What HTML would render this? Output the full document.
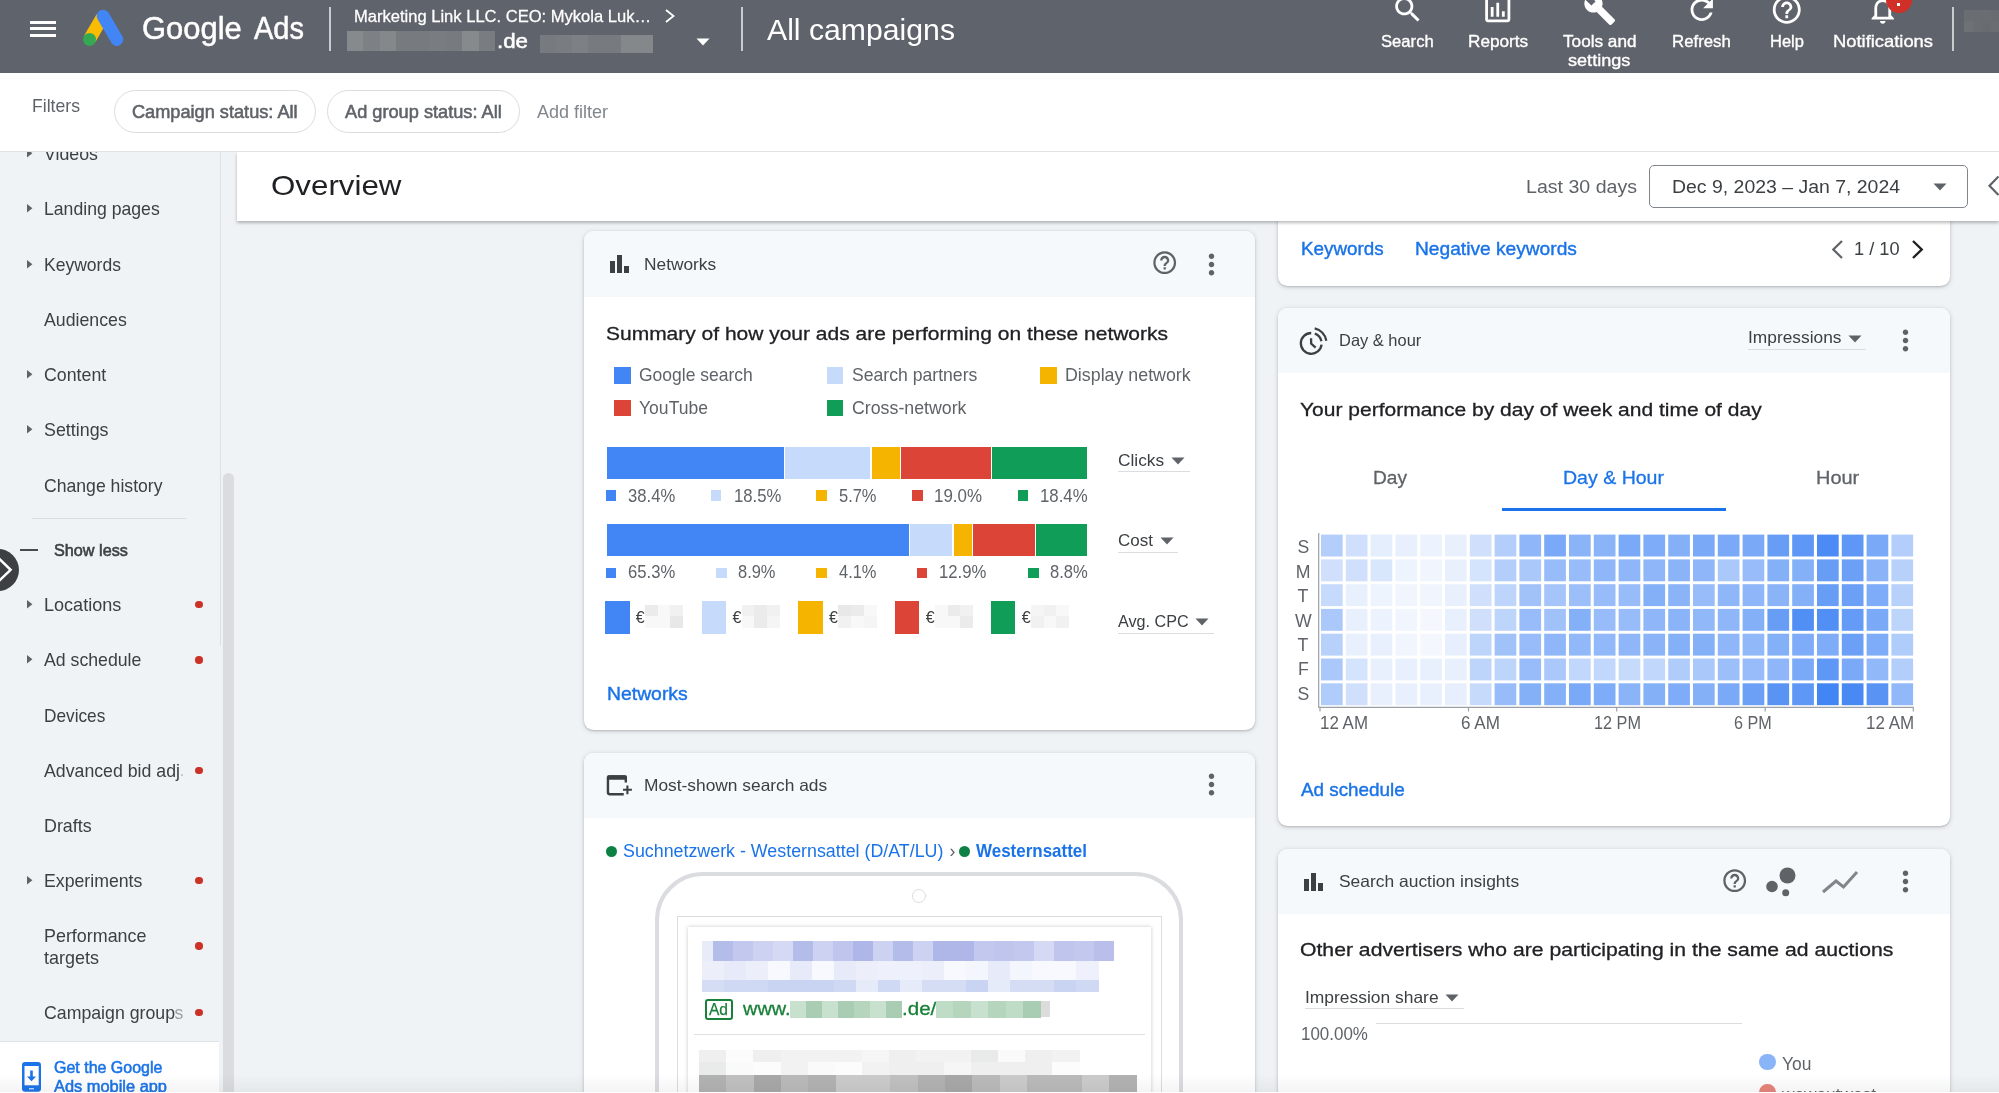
<!DOCTYPE html>
<html><head><meta charset="utf-8"><title>Google Ads - Overview</title>
<style>
*{box-sizing:border-box;margin:0;padding:0}
html,body{width:1999px;height:1093px;overflow:hidden;background:#eff3f5;font-family:"Liberation Sans",sans-serif}
.abs{position:absolute}
.t{position:absolute;white-space:pre}
svg{overflow:visible}
</style></head><body>
<div id="root" style="position:absolute;left:0;top:0;width:1999px;height:1093px;overflow:hidden;will-change:transform">
<div class="abs" style="left:219.5px;top:152.0px;width:1.0px;height:494.0px;background:#dde1e4;"></div>
<div class="abs" style="left:222.9px;top:473.4px;width:11px;height:640px;border-radius:5.5px;background:#dadce0"></div>
<span class="t" style="left:43.5px;top:142.00px;font-size:17.7px;line-height:24px;font-weight:normal;color:#3c4043;transform:scaleX(1.0044);transform-origin:0 0;">Videos</span>
<svg class="abs" style="left:26.5px;top:148.7px" width="6" height="9" viewBox="0 0 6 9"><path d="M0 0 L5.4 4.2 L0 8.4Z" fill="#5f6368"/></svg>
<span class="t" style="left:43.5px;top:197.00px;font-size:17.7px;line-height:24px;font-weight:normal;color:#3c4043;transform:scaleX(0.9969);transform-origin:0 0;">Landing pages</span>
<svg class="abs" style="left:26.5px;top:203.9px" width="6" height="9" viewBox="0 0 6 9"><path d="M0 0 L5.4 4.2 L0 8.4Z" fill="#5f6368"/></svg>
<span class="t" style="left:43.5px;top:253.00px;font-size:17.7px;line-height:24px;font-weight:normal;color:#3c4043;transform:scaleX(0.9901);transform-origin:0 0;">Keywords</span>
<svg class="abs" style="left:26.5px;top:259.5px" width="6" height="9" viewBox="0 0 6 9"><path d="M0 0 L5.4 4.2 L0 8.4Z" fill="#5f6368"/></svg>
<span class="t" style="left:43.5px;top:308.00px;font-size:17.7px;line-height:24px;font-weight:normal;color:#3c4043;transform:scaleX(1.0023);transform-origin:0 0;">Audiences</span>
<span class="t" style="left:43.5px;top:363.00px;font-size:17.7px;line-height:24px;font-weight:normal;color:#3c4043;transform:scaleX(1.0040);transform-origin:0 0;">Content</span>
<svg class="abs" style="left:26.5px;top:370.0px" width="6" height="9" viewBox="0 0 6 9"><path d="M0 0 L5.4 4.2 L0 8.4Z" fill="#5f6368"/></svg>
<span class="t" style="left:43.5px;top:418.00px;font-size:17.7px;line-height:24px;font-weight:normal;color:#3c4043;transform:scaleX(1.0090);transform-origin:0 0;">Settings</span>
<svg class="abs" style="left:26.5px;top:425.1px" width="6" height="9" viewBox="0 0 6 9"><path d="M0 0 L5.4 4.2 L0 8.4Z" fill="#5f6368"/></svg>
<span class="t" style="left:43.5px;top:474.00px;font-size:17.7px;line-height:24px;font-weight:normal;color:#3c4043;transform:scaleX(0.9961);transform-origin:0 0;">Change history</span>
<span class="t" style="left:43.5px;top:593.00px;font-size:17.7px;line-height:24px;font-weight:normal;color:#3c4043;transform:scaleX(1.0209);transform-origin:0 0;">Locations</span>
<svg class="abs" style="left:26.5px;top:599.7px" width="6" height="9" viewBox="0 0 6 9"><path d="M0 0 L5.4 4.2 L0 8.4Z" fill="#5f6368"/></svg>
<div class="abs" style="left:195px;top:600.9px;width:7.5px;height:7.5px;border-radius:50%;background:#cc3127"></div>
<span class="t" style="left:43.5px;top:648.00px;font-size:17.7px;line-height:24px;font-weight:normal;color:#3c4043;transform:scaleX(1.0004);transform-origin:0 0;">Ad schedule</span>
<svg class="abs" style="left:26.5px;top:655.1px" width="6" height="9" viewBox="0 0 6 9"><path d="M0 0 L5.4 4.2 L0 8.4Z" fill="#5f6368"/></svg>
<div class="abs" style="left:195px;top:656.3px;width:7.5px;height:7.5px;border-radius:50%;background:#cc3127"></div>
<span class="t" style="left:43.5px;top:704.00px;font-size:17.7px;line-height:24px;font-weight:normal;color:#3c4043;transform:scaleX(0.9742);transform-origin:0 0;">Devices</span>
<span class="t" style="left:43.5px;top:759.00px;font-size:17.7px;line-height:24px;font-weight:normal;color:#3c4043;transform:scaleX(1.0021);transform-origin:0 0;">Advanced bid adj</span>
<div class="abs" style="left:195px;top:766.5px;width:7.5px;height:7.5px;border-radius:50%;background:#cc3127"></div>
<span class="t" style="left:43.5px;top:814.00px;font-size:17.7px;line-height:24px;font-weight:normal;color:#3c4043;transform:scaleX(1.0087);transform-origin:0 0;">Drafts</span>
<span class="t" style="left:43.5px;top:869.00px;font-size:17.7px;line-height:24px;font-weight:normal;color:#3c4043;transform:scaleX(1.0009);transform-origin:0 0;">Experiments</span>
<svg class="abs" style="left:26.5px;top:875.6px" width="6" height="9" viewBox="0 0 6 9"><path d="M0 0 L5.4 4.2 L0 8.4Z" fill="#5f6368"/></svg>
<div class="abs" style="left:195px;top:876.8px;width:7.5px;height:7.5px;border-radius:50%;background:#cc3127"></div>
<span class="t" style="left:43.5px;top:1001.00px;font-size:17.7px;line-height:24px;font-weight:normal;color:#3c4043;transform:scaleX(1.0017);transform-origin:0 0;">Campaign group</span>
<div class="abs" style="left:195px;top:1008.9px;width:7.5px;height:7.5px;border-radius:50%;background:#cc3127"></div>
<span class="t" style="left:179.5px;top:759.00px;font-size:17.5px;line-height:23px;font-weight:normal;color:#bdc1c6;">.</span>
<span class="t" style="left:174.6px;top:1002.00px;font-size:17.5px;line-height:23px;font-weight:normal;color:#9aa0a6;">s</span>
<span class="t" style="left:43.5px;top:924.00px;font-size:17.7px;line-height:24px;font-weight:normal;color:#3c4043;transform:scaleX(1.0122);transform-origin:0 0;">Performance</span>
<span class="t" style="left:43.5px;top:946.00px;font-size:17.7px;line-height:24px;font-weight:normal;color:#3c4043;transform:scaleX(1.0170);transform-origin:0 0;">targets</span>
<div class="abs" style="left:195px;top:942.3px;width:7.5px;height:7.5px;border-radius:50%;background:#cc3127"></div>
<div class="abs" style="left:32.0px;top:518.3px;width:153.5px;height:1.0px;background:#dadce0;"></div>
<div class="abs" style="left:19.7px;top:548.5px;width:18.4px;height:2.6px;background:#474b50;"></div>
<span class="t" style="left:54.4px;top:540.00px;font-size:15.6px;line-height:21px;font-weight:normal;color:#3c4043;transform:scaleX(1.0397);transform-origin:0 0;-webkit-text-stroke:0.55px #3c4043;">Show less</span>
<div class="abs" style="left:-23px;top:548.5px;width:42px;height:42px;border-radius:50%;background:#3c4043"></div>
<svg class="abs" style="left:0;top:558px" width="14" height="24" viewBox="0 0 14 24"><path d="M-2 -0.4 L10.6 11.8 L-2 24" fill="none" stroke="#fff" stroke-width="2.5"/></svg>
<div class="abs" style="left:0.0px;top:1041.3px;width:218.7px;height:52.0px;background:#fff;border-top:1px solid #e0e3e5"></div>
<svg class="abs" style="left:22px;top:1062px" width="19" height="30" viewBox="0 0 19 30"><rect x="0" y="0" width="19" height="29.8" rx="3.2" fill="#1a73e8"/><rect x="2.5" y="4" width="14.2" height="19.3" fill="#fff"/><rect x="7" y="26.3" width="5" height="1" fill="#fff"/><path d="M8.2 8.5 h2.6 v6 h3.2 L9.5 19.2 L5 14.5 h3.2z" fill="#1a73e8"/></svg>
<span class="t" style="left:54.2px;top:1056.00px;font-size:16.5px;line-height:22px;font-weight:normal;color:#1a73e8;transform:scaleX(0.9685);transform-origin:0 0;-webkit-text-stroke:0.55px #1a73e8;">Get the Google</span>
<span class="t" style="left:54.2px;top:1075.00px;font-size:16.5px;line-height:22px;font-weight:normal;color:#1a73e8;transform:scaleX(0.9934);transform-origin:0 0;-webkit-text-stroke:0.55px #1a73e8;">Ads mobile app</span>
<div class="abs" style="left:584.0px;top:231.2px;width:671.2px;height:498.8px;background:#fff;border-radius:9.5px;box-shadow:0 1px 2px rgba(60,64,67,.24),0 1px 4px 1px rgba(60,64,67,.13);overflow:hidden"><div style="height:65.5px;background:#f5f9fb"></div></div>
<div class="abs" style="left:610.1px;top:261.3px;width:4.5px;height:12.0px;background:#3c4043;"></div><div class="abs" style="left:617.0px;top:255.4px;width:4.5px;height:17.9px;background:#3c4043;"></div><div class="abs" style="left:624.1px;top:265.8px;width:4.5px;height:7.5px;background:#3c4043;"></div>
<span class="t" style="left:644.2px;top:253.00px;font-size:16.5px;line-height:22px;font-weight:normal;color:#3c4043;transform:scaleX(1.0499);transform-origin:0 0;">Networks</span>
<svg class="abs" style="left:1151.1px;top:248.6px" width="27.4" height="27.4" viewBox="0 0 24 24"><path fill="#5f6368" d="M11 18h2v-2h-2v2zm1-16C6.48 2 2 6.48 2 12s4.48 10 10 10 10-4.48 10-10S17.52 2 12 2zm0 18c-4.41 0-8-3.59-8-8s3.59-8 8-8 8 3.59 8 8-3.59 8-8 8zm0-14c-2.21 0-4 1.79-4 4h2c0-1.1.9-2 2-2s2 .9 2 2c0 2-3 1.75-3 5h2c0-2.25 3-2.5 3-5 0-2.21-1.79-4-4-4z"/></svg>
<svg class="abs" style="left:1195.0px;top:248.0px" width="33.0" height="33.0" viewBox="0 0 24 24"><path fill="#5f6368" d="M12 8c1.1 0 2-.9 2-2s-.9-2-2-2-2 .9-2 2 .9 2 2 2zm0 2c-1.1 0-2 .9-2 2s.9 2 2 2 2-.9 2-2-.9-2-2-2zm0 6c-1.1 0-2 .9-2 2s.9 2 2 2 2-.9 2-2-.9-2-2-2z"/></svg>
<span class="t" style="left:605.7px;top:321.00px;font-size:19px;line-height:25px;font-weight:normal;color:#202124;transform:scaleX(1.1041);transform-origin:0 0;-webkit-text-stroke:0.30px #202124;">Summary of how your ads are performing on these networks</span>
<div class="abs" style="left:613.8px;top:366.8px;width:16.8px;height:16.8px;background:#4285f4;"></div>
<span class="t" style="left:639.0px;top:363.00px;font-size:17.7px;line-height:24px;font-weight:normal;color:#5f6368;transform:scaleX(0.9892);transform-origin:0 0;">Google search</span>
<div class="abs" style="left:826.7px;top:366.8px;width:16.8px;height:16.8px;background:#c6dafc;"></div>
<span class="t" style="left:851.9px;top:363.00px;font-size:17.7px;line-height:24px;font-weight:normal;color:#5f6368;transform:scaleX(0.9957);transform-origin:0 0;">Search partners</span>
<div class="abs" style="left:1039.9px;top:366.8px;width:16.8px;height:16.8px;background:#f4b400;"></div>
<span class="t" style="left:1064.7px;top:363.00px;font-size:17.7px;line-height:24px;font-weight:normal;color:#5f6368;transform:scaleX(1.0069);transform-origin:0 0;">Display network</span>
<div class="abs" style="left:613.8px;top:399.6px;width:16.8px;height:16.8px;background:#db4437;"></div>
<span class="t" style="left:639.0px;top:396.00px;font-size:17.7px;line-height:24px;font-weight:normal;color:#5f6368;transform:scaleX(0.9926);transform-origin:0 0;">YouTube</span>
<div class="abs" style="left:826.7px;top:399.6px;width:16.8px;height:16.8px;background:#0f9d58;"></div>
<span class="t" style="left:851.9px;top:396.00px;font-size:17.7px;line-height:24px;font-weight:normal;color:#5f6368;transform:scaleX(1.0042);transform-origin:0 0;">Cross-network</span>
<div class="abs" style="left:606.8px;top:446.5px;width:176.8px;height:32.6px;background:#4285f4;"></div><div class="abs" style="left:784.8px;top:446.5px;width:85.6px;height:32.6px;background:#c6dafc;"></div><div class="abs" style="left:871.6px;top:446.5px;width:28.2px;height:32.6px;background:#f4b400;"></div><div class="abs" style="left:901.0px;top:446.5px;width:89.9px;height:32.6px;background:#db4437;"></div><div class="abs" style="left:992.1px;top:446.5px;width:95.4px;height:32.6px;background:#0f9d58;"></div>
<div class="abs" style="left:606.8px;top:523.5px;width:302.1px;height:32.6px;background:#4285f4;"></div><div class="abs" style="left:910.1px;top:523.5px;width:42.3px;height:32.6px;background:#c6dafc;"></div><div class="abs" style="left:953.6px;top:523.5px;width:18.0px;height:32.6px;background:#f4b400;"></div><div class="abs" style="left:972.8px;top:523.5px;width:61.8px;height:32.6px;background:#db4437;"></div><div class="abs" style="left:1035.8px;top:523.5px;width:51.7px;height:32.6px;background:#0f9d58;"></div>
<span class="t" style="left:1118.0px;top:449.00px;font-size:16.5px;line-height:22px;font-weight:normal;color:#3c4043;transform:scaleX(1.0500);transform-origin:0 0;">Clicks</span><svg class="abs" style="left:1170.7px;top:456.8px" width="14" height="8" viewBox="0 0 14 8"><path d="M0.5 0.5 H13.5 L7 7.5Z" fill="#5f6368"/></svg><div class="abs" style="left:1118.0px;top:471.2px;width:71.7px;height:1.0px;background:#dadce0;"></div>
<span class="t" style="left:1118.0px;top:529.00px;font-size:16.5px;line-height:22px;font-weight:normal;color:#3c4043;transform:scaleX(1.0313);transform-origin:0 0;">Cost</span><svg class="abs" style="left:1159.5px;top:537.4px" width="14" height="8" viewBox="0 0 14 8"><path d="M0.5 0.5 H13.5 L7 7.5Z" fill="#5f6368"/></svg><div class="abs" style="left:1118.0px;top:551.8px;width:60.2px;height:1.0px;background:#dadce0;"></div>
<span class="t" style="left:1118.0px;top:610.00px;font-size:16.5px;line-height:22px;font-weight:normal;color:#3c4043;transform:scaleX(0.9800);transform-origin:0 0;">Avg. CPC</span><svg class="abs" style="left:1195.2px;top:618.1px" width="14" height="8" viewBox="0 0 14 8"><path d="M0.5 0.5 H13.5 L7 7.5Z" fill="#5f6368"/></svg><div class="abs" style="left:1118.0px;top:632.5px;width:95.6px;height:1.0px;background:#dadce0;"></div>
<div class="abs" style="left:605.7px;top:490.3px;width:10.5px;height:10.5px;background:#4285f4;"></div>
<span class="t" style="left:627.8px;top:484.00px;font-size:17.7px;line-height:24px;font-weight:normal;color:#5f6368;transform:scaleX(0.9411);transform-origin:0 0;">38.4%</span>
<div class="abs" style="left:710.8px;top:490.3px;width:10.5px;height:10.5px;background:#c6dafc;"></div>
<span class="t" style="left:733.5px;top:484.00px;font-size:17.7px;line-height:24px;font-weight:normal;color:#5f6368;transform:scaleX(0.9431);transform-origin:0 0;">18.5%</span>
<div class="abs" style="left:816.1px;top:490.3px;width:10.5px;height:10.5px;background:#f4b400;"></div>
<span class="t" style="left:838.9px;top:484.00px;font-size:17.7px;line-height:24px;font-weight:normal;color:#5f6368;transform:scaleX(0.9299);transform-origin:0 0;">5.7%</span>
<div class="abs" style="left:912.1px;top:490.3px;width:10.5px;height:10.5px;background:#db4437;"></div>
<span class="t" style="left:934.1px;top:484.00px;font-size:17.7px;line-height:24px;font-weight:normal;color:#5f6368;transform:scaleX(0.9570);transform-origin:0 0;">19.0%</span>
<div class="abs" style="left:1017.5px;top:490.3px;width:10.5px;height:10.5px;background:#0f9d58;"></div>
<span class="t" style="left:1039.9px;top:484.00px;font-size:17.7px;line-height:24px;font-weight:normal;color:#5f6368;transform:scaleX(0.9490);transform-origin:0 0;">18.4%</span>
<div class="abs" style="left:605.7px;top:567.6px;width:10.5px;height:10.5px;background:#4285f4;"></div>
<span class="t" style="left:627.8px;top:560.00px;font-size:17.7px;line-height:24px;font-weight:normal;color:#5f6368;transform:scaleX(0.9411);transform-origin:0 0;">65.3%</span>
<div class="abs" style="left:716.4px;top:567.6px;width:10.5px;height:10.5px;background:#c6dafc;"></div>
<span class="t" style="left:738.0px;top:560.00px;font-size:17.7px;line-height:24px;font-weight:normal;color:#5f6368;transform:scaleX(0.9299);transform-origin:0 0;">8.9%</span>
<div class="abs" style="left:816.1px;top:567.6px;width:10.5px;height:10.5px;background:#f4b400;"></div>
<span class="t" style="left:838.9px;top:560.00px;font-size:17.7px;line-height:24px;font-weight:normal;color:#5f6368;transform:scaleX(0.9299);transform-origin:0 0;">4.1%</span>
<div class="abs" style="left:916.6px;top:567.6px;width:10.5px;height:10.5px;background:#db4437;"></div>
<span class="t" style="left:939.4px;top:560.00px;font-size:17.7px;line-height:24px;font-weight:normal;color:#5f6368;transform:scaleX(0.9431);transform-origin:0 0;">12.9%</span>
<div class="abs" style="left:1028.0px;top:567.6px;width:10.5px;height:10.5px;background:#0f9d58;"></div>
<span class="t" style="left:1049.7px;top:560.00px;font-size:17.7px;line-height:24px;font-weight:normal;color:#5f6368;transform:scaleX(0.9373);transform-origin:0 0;">8.8%</span>
<div class="abs" style="left:605.0px;top:600.5px;width:24.5px;height:33.0px;background:#4285f4;"></div>
<span class="t" style="left:635.8px;top:607.00px;font-size:16px;line-height:21px;font-weight:normal;color:#3c4043;">€</span>
<div class="abs" style="left:645.0px;top:604.5px;width:13.2px;height:12.0px;background:#ebebeb;"></div><div class="abs" style="left:657.7px;top:604.5px;width:13.2px;height:12.0px;background:#f8f8f8;"></div><div class="abs" style="left:670.3px;top:604.5px;width:13.2px;height:12.0px;background:#f1f1f1;"></div><div class="abs" style="left:645.0px;top:616.0px;width:13.2px;height:12.0px;background:#f8f8f8;"></div><div class="abs" style="left:657.7px;top:616.0px;width:13.2px;height:12.0px;background:#f8f8f8;"></div><div class="abs" style="left:670.3px;top:616.0px;width:13.2px;height:12.0px;background:#e8e8e8;"></div>
<div class="abs" style="left:701.7px;top:600.5px;width:24.5px;height:33.0px;background:#c6dafc;"></div>
<span class="t" style="left:732.5px;top:607.00px;font-size:16px;line-height:21px;font-weight:normal;color:#3c4043;">€</span>
<div class="abs" style="left:741.7px;top:604.5px;width:13.2px;height:12.0px;background:#f1f1f1;"></div><div class="abs" style="left:754.4px;top:604.5px;width:13.2px;height:12.0px;background:#ebebeb;"></div><div class="abs" style="left:767.0px;top:604.5px;width:13.2px;height:12.0px;background:#f1f1f1;"></div><div class="abs" style="left:741.7px;top:616.0px;width:13.2px;height:12.0px;background:#f8f8f8;"></div><div class="abs" style="left:754.4px;top:616.0px;width:13.2px;height:12.0px;background:#ebebeb;"></div><div class="abs" style="left:767.0px;top:616.0px;width:13.2px;height:12.0px;background:#f5f5f5;"></div>
<div class="abs" style="left:798.3px;top:600.5px;width:24.5px;height:33.0px;background:#f4b400;"></div>
<span class="t" style="left:829.1px;top:607.00px;font-size:16px;line-height:21px;font-weight:normal;color:#3c4043;">€</span>
<div class="abs" style="left:838.3px;top:604.5px;width:13.2px;height:12.0px;background:#e8e8e8;"></div><div class="abs" style="left:851.0px;top:604.5px;width:13.2px;height:12.0px;background:#ebebeb;"></div><div class="abs" style="left:863.6px;top:604.5px;width:13.2px;height:12.0px;background:#f8f8f8;"></div><div class="abs" style="left:838.3px;top:616.0px;width:13.2px;height:12.0px;background:#f1f1f1;"></div><div class="abs" style="left:851.0px;top:616.0px;width:13.2px;height:12.0px;background:#f8f8f8;"></div><div class="abs" style="left:863.6px;top:616.0px;width:13.2px;height:12.0px;background:#f5f5f5;"></div>
<div class="abs" style="left:894.9px;top:600.5px;width:24.5px;height:33.0px;background:#db4437;"></div>
<span class="t" style="left:925.7px;top:607.00px;font-size:16px;line-height:21px;font-weight:normal;color:#3c4043;">€</span>
<div class="abs" style="left:934.9px;top:604.5px;width:13.2px;height:12.0px;background:#f8f8f8;"></div><div class="abs" style="left:947.6px;top:604.5px;width:13.2px;height:12.0px;background:#ebebeb;"></div><div class="abs" style="left:960.2px;top:604.5px;width:13.2px;height:12.0px;background:#f1f1f1;"></div><div class="abs" style="left:934.9px;top:616.0px;width:13.2px;height:12.0px;background:#f8f8f8;"></div><div class="abs" style="left:947.6px;top:616.0px;width:13.2px;height:12.0px;background:#f8f8f8;"></div><div class="abs" style="left:960.2px;top:616.0px;width:13.2px;height:12.0px;background:#ebebeb;"></div>
<div class="abs" style="left:990.9px;top:600.5px;width:24.5px;height:33.0px;background:#0f9d58;"></div>
<span class="t" style="left:1021.7px;top:607.00px;font-size:16px;line-height:21px;font-weight:normal;color:#3c4043;">€</span>
<div class="abs" style="left:1030.9px;top:604.5px;width:13.2px;height:12.0px;background:#f5f5f5;"></div><div class="abs" style="left:1043.6px;top:604.5px;width:13.2px;height:12.0px;background:#f1f1f1;"></div><div class="abs" style="left:1056.2px;top:604.5px;width:13.2px;height:12.0px;background:#f8f8f8;"></div><div class="abs" style="left:1030.9px;top:616.0px;width:13.2px;height:12.0px;background:#f1f1f1;"></div><div class="abs" style="left:1043.6px;top:616.0px;width:13.2px;height:12.0px;background:#f8f8f8;"></div><div class="abs" style="left:1056.2px;top:616.0px;width:13.2px;height:12.0px;background:#f1f1f1;"></div>
<span class="t" style="left:606.5px;top:682.00px;font-size:18.2px;line-height:24px;font-weight:normal;color:#1a73e8;transform:scaleX(1.0647);transform-origin:0 0;-webkit-text-stroke:0.4px #1a73e8;">Networks</span>
<div class="abs" style="left:584.0px;top:752.5px;width:671.2px;height:400.0px;background:#fff;border-radius:9.5px;box-shadow:0 1px 2px rgba(60,64,67,.24),0 1px 4px 1px rgba(60,64,67,.13);overflow:hidden"><div style="height:65.5px;background:#f5f9fb"></div></div>
<svg class="abs" style="left:606px;top:774px" width="28" height="23" viewBox="606 774 28 23"><path d="M625.8 782.5 V778.4 a2 2 0 0 0 -2 -2 H609.95 a2 2 0 0 0 -2 2 V792.3 a2 2 0 0 0 2 2 H623.75" fill="none" stroke="#3c4043" stroke-width="2.4"/><rect x="606.9" y="775.25" width="20.1" height="4.6" rx="1.5" fill="#3c4043"/><path d="M623 789.75 H631.9 M627.4 785.4 V794.3" stroke="#3c4043" stroke-width="2.1" fill="none"/></svg>
<span class="t" style="left:644.2px;top:774.00px;font-size:16.5px;line-height:22px;font-weight:normal;color:#3c4043;transform:scaleX(1.0514);transform-origin:0 0;">Most-shown search ads</span>
<svg class="abs" style="left:1195.0px;top:768.2px" width="33.0" height="33.0" viewBox="0 0 24 24"><path fill="#5f6368" d="M12 8c1.1 0 2-.9 2-2s-.9-2-2-2-2 .9-2 2 .9 2 2 2zm0 2c-1.1 0-2 .9-2 2s.9 2 2 2 2-.9 2-2-.9-2-2-2zm0 6c-1.1 0-2 .9-2 2s.9 2 2 2 2-.9 2-2-.9-2-2-2z"/></svg>
<div class="abs" style="left:605.5px;top:845.5px;width:11px;height:11px;border-radius:50%;background:#0d8043"></div>
<span class="t" style="left:622.5px;top:840.00px;font-size:17.5px;line-height:23px;font-weight:normal;color:#1a73e8;transform:scaleX(1.0189);transform-origin:0 0;">Suchnetzwerk - Westernsattel (D/AT/LU)</span>
<span class="t" style="left:949.5px;top:840.00px;font-size:17.5px;line-height:23px;font-weight:normal;color:#5f6368;">›</span>
<div class="abs" style="left:959.2px;top:845.5px;width:11px;height:11px;border-radius:50%;background:#0d8043"></div>
<span class="t" style="left:976.2px;top:839.00px;font-size:17.7px;line-height:24px;font-weight:bold;color:#1a73e8;transform:scaleX(0.9596);transform-origin:0 0;">Westernsattel</span>
<div class="abs" style="left:655px;top:872.4px;width:528.4px;height:300px;border:4.5px solid #dadce0;border-radius:48px"></div>
<div class="abs" style="left:912.4px;top:888.5px;width:14px;height:14px;border:1.3px solid #dadce0;border-radius:50%"></div>
<div class="abs" style="left:676.8px;top:916px;width:485.6px;height:250px;border:1.5px solid #dadce0"></div>
<div class="abs" style="left:688px;top:926.6px;width:463.2px;height:250px;background:#fff;box-shadow:0 0 4px rgba(0,0,0,.22)"></div>
<div class="abs" style="left:713.0px;top:940.6px;width:20.5px;height:20.5px;background:#b4bcea;"></div><div class="abs" style="left:733.0px;top:940.6px;width:20.5px;height:20.5px;background:#c3c8ee;"></div><div class="abs" style="left:753.1px;top:940.6px;width:20.5px;height:20.5px;background:#cdd2f2;"></div><div class="abs" style="left:773.1px;top:940.6px;width:20.5px;height:20.5px;background:#d5d9f4;"></div><div class="abs" style="left:793.2px;top:940.6px;width:20.5px;height:20.5px;background:#b4bcea;"></div><div class="abs" style="left:813.2px;top:940.6px;width:20.5px;height:20.5px;background:#cdd2f2;"></div><div class="abs" style="left:833.2px;top:940.6px;width:20.5px;height:20.5px;background:#bfc5ec;"></div><div class="abs" style="left:853.3px;top:940.6px;width:20.5px;height:20.5px;background:#aeb7e8;"></div><div class="abs" style="left:873.3px;top:940.6px;width:20.5px;height:20.5px;background:#cdd2f2;"></div><div class="abs" style="left:893.4px;top:940.6px;width:20.5px;height:20.5px;background:#b4bcea;"></div><div class="abs" style="left:913.4px;top:940.6px;width:20.5px;height:20.5px;background:#cdd2f2;"></div><div class="abs" style="left:933.4px;top:940.6px;width:20.5px;height:20.5px;background:#aeb7e8;"></div><div class="abs" style="left:953.5px;top:940.6px;width:20.5px;height:20.5px;background:#aeb7e8;"></div><div class="abs" style="left:973.5px;top:940.6px;width:20.5px;height:20.5px;background:#c3c8ee;"></div><div class="abs" style="left:993.6px;top:940.6px;width:20.5px;height:20.5px;background:#bfc5ec;"></div><div class="abs" style="left:1013.6px;top:940.6px;width:20.5px;height:20.5px;background:#c3c8ee;"></div><div class="abs" style="left:1033.6px;top:940.6px;width:20.5px;height:20.5px;background:#d5d9f4;"></div><div class="abs" style="left:1053.7px;top:940.6px;width:20.5px;height:20.5px;background:#bfc5ec;"></div><div class="abs" style="left:1073.7px;top:940.6px;width:20.5px;height:20.5px;background:#c3c8ee;"></div><div class="abs" style="left:1093.8px;top:940.6px;width:20.5px;height:20.5px;background:#b9bfea;"></div>
<div class="abs" style="left:702.4px;top:940.6px;width:11.0px;height:20.0px;background:#e8ebf8;"></div>
<div class="abs" style="left:702.4px;top:960.6px;width:22.5px;height:19.5px;background:#eceffa;"></div><div class="abs" style="left:724.4px;top:960.6px;width:22.5px;height:19.5px;background:#e6eaf9;"></div><div class="abs" style="left:746.4px;top:960.6px;width:22.5px;height:19.5px;background:#eceffa;"></div><div class="abs" style="left:768.4px;top:960.6px;width:22.5px;height:19.5px;background:#f8f9fe;"></div><div class="abs" style="left:790.4px;top:960.6px;width:22.5px;height:19.5px;background:#e6eaf9;"></div><div class="abs" style="left:812.4px;top:960.6px;width:22.5px;height:19.5px;background:#f8f9fe;"></div><div class="abs" style="left:834.4px;top:960.6px;width:22.5px;height:19.5px;background:#e6eaf9;"></div><div class="abs" style="left:856.4px;top:960.6px;width:22.5px;height:19.5px;background:#eceffa;"></div><div class="abs" style="left:878.4px;top:960.6px;width:22.5px;height:19.5px;background:#eef1fb;"></div><div class="abs" style="left:900.4px;top:960.6px;width:22.5px;height:19.5px;background:#eef1fb;"></div><div class="abs" style="left:922.4px;top:960.6px;width:22.5px;height:19.5px;background:#eceffa;"></div><div class="abs" style="left:944.4px;top:960.6px;width:22.5px;height:19.5px;background:#f8f9fe;"></div><div class="abs" style="left:966.4px;top:960.6px;width:22.5px;height:19.5px;background:#f4f6fd;"></div><div class="abs" style="left:988.4px;top:960.6px;width:22.5px;height:19.5px;background:#e6eaf9;"></div><div class="abs" style="left:1010.4px;top:960.6px;width:22.5px;height:19.5px;background:#f4f6fd;"></div><div class="abs" style="left:1032.4px;top:960.6px;width:22.5px;height:19.5px;background:#f8f9fe;"></div><div class="abs" style="left:1054.4px;top:960.6px;width:22.5px;height:19.5px;background:#f8f9fe;"></div><div class="abs" style="left:1076.4px;top:960.6px;width:22.5px;height:19.5px;background:#eef1fb;"></div>
<div class="abs" style="left:702.4px;top:979.6px;width:22.5px;height:12.0px;background:#d5ddf5;"></div><div class="abs" style="left:724.4px;top:979.6px;width:22.5px;height:12.0px;background:#d0d9f4;"></div><div class="abs" style="left:746.4px;top:979.6px;width:22.5px;height:12.0px;background:#d0d9f4;"></div><div class="abs" style="left:768.4px;top:979.6px;width:22.5px;height:12.0px;background:#c9d3f2;"></div><div class="abs" style="left:790.4px;top:979.6px;width:22.5px;height:12.0px;background:#c9d3f2;"></div><div class="abs" style="left:812.4px;top:979.6px;width:22.5px;height:12.0px;background:#c9d3f2;"></div><div class="abs" style="left:834.4px;top:979.6px;width:22.5px;height:12.0px;background:#d0d9f4;"></div><div class="abs" style="left:856.4px;top:979.6px;width:22.5px;height:12.0px;background:#e6ebfa;"></div><div class="abs" style="left:878.4px;top:979.6px;width:22.5px;height:12.0px;background:#d0d9f4;"></div><div class="abs" style="left:900.4px;top:979.6px;width:22.5px;height:12.0px;background:#e6ebfa;"></div><div class="abs" style="left:922.4px;top:979.6px;width:22.5px;height:12.0px;background:#d5ddf5;"></div><div class="abs" style="left:944.4px;top:979.6px;width:22.5px;height:12.0px;background:#d5ddf5;"></div><div class="abs" style="left:966.4px;top:979.6px;width:22.5px;height:12.0px;background:#c9d3f2;"></div><div class="abs" style="left:988.4px;top:979.6px;width:22.5px;height:12.0px;background:#e6ebfa;"></div><div class="abs" style="left:1010.4px;top:979.6px;width:22.5px;height:12.0px;background:#d5ddf5;"></div><div class="abs" style="left:1032.4px;top:979.6px;width:22.5px;height:12.0px;background:#d5ddf5;"></div><div class="abs" style="left:1054.4px;top:979.6px;width:22.5px;height:12.0px;background:#c9d3f2;"></div><div class="abs" style="left:1076.4px;top:979.6px;width:22.5px;height:12.0px;background:#d0d9f4;"></div>
<div class="abs" style="left:704.8px;top:999px;width:28px;height:21px;border:2px solid #188038;border-radius:3px"></div>
<span class="t" style="left:709.3px;top:999.00px;font-size:16px;line-height:21px;font-weight:normal;color:#188038;transform:scaleX(0.9705);transform-origin:0 0;-webkit-text-stroke:0.25px #188038;">Ad</span>
<span class="t" style="left:743.0px;top:996.00px;font-size:19px;line-height:25px;font-weight:normal;color:#188038;transform:scaleX(1.0483);transform-origin:0 0;-webkit-text-stroke:0.30px #188038;">www.</span>
<div class="abs" style="left:790.0px;top:1000.9px;width:16.4px;height:16.9px;background:#c8e1ce;"></div><div class="abs" style="left:805.9px;top:1000.9px;width:16.4px;height:16.9px;background:#a9cdb3;"></div><div class="abs" style="left:821.9px;top:1000.9px;width:16.4px;height:16.9px;background:#c8e1ce;"></div><div class="abs" style="left:837.8px;top:1000.9px;width:16.4px;height:16.9px;background:#a9cdb3;"></div><div class="abs" style="left:853.8px;top:1000.9px;width:16.4px;height:16.9px;background:#b5d5bd;"></div><div class="abs" style="left:869.7px;top:1000.9px;width:16.4px;height:16.9px;background:#c8e1ce;"></div><div class="abs" style="left:885.7px;top:1000.9px;width:16.4px;height:16.9px;background:#a9cdb3;"></div>
<span class="t" style="left:901.6px;top:996.00px;font-size:19px;line-height:25px;font-weight:normal;color:#188038;transform:scaleX(1.0819);transform-origin:0 0;-webkit-text-stroke:0.30px #188038;">.de/</span>
<div class="abs" style="left:935.9px;top:1000.9px;width:18.0px;height:16.9px;background:#bfdcc6;"></div><div class="abs" style="left:953.4px;top:1000.9px;width:18.0px;height:16.9px;background:#b5d5bd;"></div><div class="abs" style="left:970.9px;top:1000.9px;width:18.0px;height:16.9px;background:#c8e1ce;"></div><div class="abs" style="left:988.4px;top:1000.9px;width:18.0px;height:16.9px;background:#b5d5bd;"></div><div class="abs" style="left:1005.9px;top:1000.9px;width:18.0px;height:16.9px;background:#bfdcc6;"></div><div class="abs" style="left:1023.4px;top:1000.9px;width:18.0px;height:16.9px;background:#a9cdb3;"></div>
<div class="abs" style="left:1041.0px;top:1000.9px;width:8.7px;height:16.4px;background:#dcdcdc;"></div>
<div class="abs" style="left:693.6px;top:1033.6px;width:451.7px;height:1.0px;background:#e0e0e0;"></div>
<div class="abs" style="left:698.9px;top:1050.0px;width:27.7px;height:12.8px;background:#efefef;"></div><div class="abs" style="left:726.1px;top:1050.0px;width:27.7px;height:12.8px;background:#fcfcfc;"></div><div class="abs" style="left:753.3px;top:1050.0px;width:27.7px;height:12.8px;background:#efefef;"></div><div class="abs" style="left:780.5px;top:1050.0px;width:27.7px;height:12.8px;background:#f2f2f2;"></div><div class="abs" style="left:807.6px;top:1050.0px;width:27.7px;height:12.8px;background:#f2f2f2;"></div><div class="abs" style="left:834.8px;top:1050.0px;width:27.7px;height:12.8px;background:#f2f2f2;"></div><div class="abs" style="left:862.0px;top:1050.0px;width:27.7px;height:12.8px;background:#f6f6f6;"></div><div class="abs" style="left:889.2px;top:1050.0px;width:27.7px;height:12.8px;background:#efefef;"></div><div class="abs" style="left:916.4px;top:1050.0px;width:27.7px;height:12.8px;background:#f2f2f2;"></div><div class="abs" style="left:943.6px;top:1050.0px;width:27.7px;height:12.8px;background:#f2f2f2;"></div><div class="abs" style="left:970.8px;top:1050.0px;width:27.7px;height:12.8px;background:#e9ebeb;"></div><div class="abs" style="left:997.9px;top:1050.0px;width:27.7px;height:12.8px;background:#fafafa;"></div><div class="abs" style="left:1025.1px;top:1050.0px;width:27.7px;height:12.8px;background:#efefef;"></div><div class="abs" style="left:1052.3px;top:1050.0px;width:27.7px;height:12.8px;background:#f2f2f2;"></div><div class="abs" style="left:698.9px;top:1062.2px;width:27.7px;height:12.8px;background:#e9ebeb;"></div><div class="abs" style="left:726.1px;top:1062.2px;width:27.7px;height:12.8px;background:#fafafa;"></div><div class="abs" style="left:753.3px;top:1062.2px;width:27.7px;height:12.8px;background:#fcfcfc;"></div><div class="abs" style="left:780.5px;top:1062.2px;width:27.7px;height:12.8px;background:#f2f2f2;"></div><div class="abs" style="left:807.6px;top:1062.2px;width:27.7px;height:12.8px;background:#fafafa;"></div><div class="abs" style="left:834.8px;top:1062.2px;width:27.7px;height:12.8px;background:#fcfcfc;"></div><div class="abs" style="left:862.0px;top:1062.2px;width:27.7px;height:12.8px;background:#f2f2f2;"></div><div class="abs" style="left:889.2px;top:1062.2px;width:27.7px;height:12.8px;background:#efefef;"></div><div class="abs" style="left:916.4px;top:1062.2px;width:27.7px;height:12.8px;background:#efefef;"></div><div class="abs" style="left:943.6px;top:1062.2px;width:27.7px;height:12.8px;background:#f6f6f6;"></div><div class="abs" style="left:970.8px;top:1062.2px;width:27.7px;height:12.8px;background:#efefef;"></div><div class="abs" style="left:997.9px;top:1062.2px;width:27.7px;height:12.8px;background:#efefef;"></div><div class="abs" style="left:1025.1px;top:1062.2px;width:27.7px;height:12.8px;background:#efefef;"></div><div class="abs" style="left:1052.3px;top:1062.2px;width:27.7px;height:12.8px;background:#fcfcfc;"></div>
<div class="abs" style="left:698.9px;top:1075.0px;width:27.8px;height:18.5px;background:#b2b2b2;"></div><div class="abs" style="left:726.2px;top:1075.0px;width:27.8px;height:18.5px;background:#c0c0c0;"></div><div class="abs" style="left:753.6px;top:1075.0px;width:27.8px;height:18.5px;background:#a8a8a8;"></div><div class="abs" style="left:780.9px;top:1075.0px;width:27.8px;height:18.5px;background:#bababa;"></div><div class="abs" style="left:808.2px;top:1075.0px;width:27.8px;height:18.5px;background:#b2b2b2;"></div><div class="abs" style="left:835.6px;top:1075.0px;width:27.8px;height:18.5px;background:#cbcbcb;"></div><div class="abs" style="left:862.9px;top:1075.0px;width:27.8px;height:18.5px;background:#cbcbcb;"></div><div class="abs" style="left:890.2px;top:1075.0px;width:27.8px;height:18.5px;background:#c0c0c0;"></div><div class="abs" style="left:917.5px;top:1075.0px;width:27.8px;height:18.5px;background:#b2b2b2;"></div><div class="abs" style="left:944.9px;top:1075.0px;width:27.8px;height:18.5px;background:#a8a8a8;"></div><div class="abs" style="left:972.2px;top:1075.0px;width:27.8px;height:18.5px;background:#bababa;"></div><div class="abs" style="left:999.5px;top:1075.0px;width:27.8px;height:18.5px;background:#cbcbcb;"></div><div class="abs" style="left:1026.9px;top:1075.0px;width:27.8px;height:18.5px;background:#bababa;"></div><div class="abs" style="left:1054.2px;top:1075.0px;width:27.8px;height:18.5px;background:#bababa;"></div><div class="abs" style="left:1081.5px;top:1075.0px;width:27.8px;height:18.5px;background:#cbcbcb;"></div><div class="abs" style="left:1108.9px;top:1075.0px;width:27.8px;height:18.5px;background:#b2b2b2;"></div>
<div class="abs" style="left:1277.7px;top:170.0px;width:672.5px;height:115.8px;background:#fff;border-radius:9.5px;box-shadow:0 1px 2px rgba(60,64,67,.24),0 1px 4px 1px rgba(60,64,67,.13);overflow:hidden"></div>
<span class="t" style="left:1300.7px;top:237.00px;font-size:18.2px;line-height:24px;font-weight:normal;color:#1a73e8;transform:scaleX(1.0343);transform-origin:0 0;-webkit-text-stroke:0.4px #1a73e8;">Keywords</span>
<span class="t" style="left:1415.3px;top:237.00px;font-size:18.2px;line-height:24px;font-weight:normal;color:#1a73e8;transform:scaleX(1.0537);transform-origin:0 0;-webkit-text-stroke:0.4px #1a73e8;">Negative keywords</span>
<svg class="abs" style="left:1830px;top:239px" width="14" height="21" viewBox="0 0 14 21"><path d="M12 2 L3.3 10.5 L12 19" fill="none" stroke="#5f6368" stroke-width="2.2"/></svg>
<span class="t" style="left:1854.0px;top:237.00px;font-size:17.7px;line-height:24px;font-weight:normal;color:#3c4043;transform:scaleX(1.0301);transform-origin:0 0;">1 / 10</span>
<svg class="abs" style="left:1911px;top:239px" width="14" height="21" viewBox="0 0 14 21"><path d="M2 2 L10.7 10.5 L2 19" fill="none" stroke="#202124" stroke-width="2.4"/></svg>
<div class="abs" style="left:1277.7px;top:307.6px;width:672.5px;height:518.4px;background:#fff;border-radius:9.5px;box-shadow:0 1px 2px rgba(60,64,67,.24),0 1px 4px 1px rgba(60,64,67,.13);overflow:hidden"><div style="height:65.3px;background:#f5f9fb"></div></div>
<svg class="abs" style="left:1296px;top:324.5px" width="34" height="34" viewBox="1296 324 34 34"><g fill="none" stroke="#3c4043" stroke-width="2.3"><path d="M1311.25 332 A10.4 10.4 0 1 0 1321.57 343.67"/><path d="M1314.81 332.63 A10.4 10.4 0 0 1 1321.42 340.24"/><path d="M1314.69 327.49 A15.3 15.3 0 0 1 1326.32 339.74"/><path d="M1311.1 337.3 V342.6 L1315.6 346.6"/></g></svg>
<span class="t" style="left:1339.3px;top:329.00px;font-size:16.5px;line-height:22px;font-weight:normal;color:#3c4043;transform:scaleX(0.9970);transform-origin:0 0;">Day &amp; hour</span>
<span class="t" style="left:1748.0px;top:326.00px;font-size:16.5px;line-height:22px;font-weight:normal;color:#3c4043;transform:scaleX(1.0511);transform-origin:0 0;">Impressions</span><svg class="abs" style="left:1848.0px;top:334.6px" width="14" height="8" viewBox="0 0 14 8"><path d="M0.5 0.5 H13.5 L7 7.5Z" fill="#5f6368"/></svg><div class="abs" style="left:1748.0px;top:349.0px;width:118.3px;height:1.0px;background:#dadce0;"></div>
<svg class="abs" style="left:1889.3px;top:323.5px" width="33.0" height="33.0" viewBox="0 0 24 24"><path fill="#5f6368" d="M12 8c1.1 0 2-.9 2-2s-.9-2-2-2-2 .9-2 2 .9 2 2 2zm0 2c-1.1 0-2 .9-2 2s.9 2 2 2 2-.9 2-2-.9-2-2-2zm0 6c-1.1 0-2 .9-2 2s.9 2 2 2 2-.9 2-2-.9-2-2-2z"/></svg>
<span class="t" style="left:1300.0px;top:397.00px;font-size:19px;line-height:25px;font-weight:normal;color:#202124;transform:scaleX(1.1057);transform-origin:0 0;-webkit-text-stroke:0.30px #202124;">Your performance by day of week and time of day</span>
<span class="t" style="left:1372.8px;top:465.00px;font-size:19px;line-height:25px;font-weight:normal;color:#5f6368;transform:scaleX(1.0060);transform-origin:0 0;-webkit-text-stroke:0.30px #5f6368;">Day</span>
<span class="t" style="left:1563.0px;top:465.00px;font-size:19px;line-height:25px;font-weight:normal;color:#1a73e8;transform:scaleX(1.0285);transform-origin:0 0;-webkit-text-stroke:0.30px #1a73e8;">Day &amp; Hour</span>
<span class="t" style="left:1816.4px;top:465.00px;font-size:19px;line-height:25px;font-weight:normal;color:#5f6368;transform:scaleX(1.0489);transform-origin:0 0;-webkit-text-stroke:0.30px #5f6368;">Hour</span>
<div class="abs" style="left:1502.0px;top:507.5px;width:223.8px;height:3.3px;background:#1a73e8;"></div>
<span class="t" style="left:1297.5px;top:535.00px;font-size:17.7px;line-height:24px;font-weight:normal;color:#5f6368;">S</span>
<span class="t" style="left:1295.8px;top:560.00px;font-size:17.7px;line-height:24px;font-weight:normal;color:#5f6368;">M</span>
<span class="t" style="left:1297.5px;top:584.00px;font-size:17.7px;line-height:24px;font-weight:normal;color:#5f6368;">T</span>
<span class="t" style="left:1295.0px;top:609.00px;font-size:17.7px;line-height:24px;font-weight:normal;color:#5f6368;">W</span>
<span class="t" style="left:1297.5px;top:633.00px;font-size:17.7px;line-height:24px;font-weight:normal;color:#5f6368;">T</span>
<span class="t" style="left:1298.0px;top:657.00px;font-size:17.7px;line-height:24px;font-weight:normal;color:#5f6368;">F</span>
<span class="t" style="left:1297.5px;top:682.00px;font-size:17.7px;line-height:24px;font-weight:normal;color:#5f6368;">S</span>
<svg class="abs" style="left:1318px;top:533px" width="600" height="180" viewBox="1318 533 600 180"><rect x="1321.0" y="534.6" width="21.7" height="21.9" fill="#4285f4" fill-opacity="0.40"/><rect x="1345.8" y="534.6" width="21.7" height="21.9" fill="#4285f4" fill-opacity="0.25"/><rect x="1370.6" y="534.6" width="21.7" height="21.9" fill="#4285f4" fill-opacity="0.14"/><rect x="1395.4" y="534.6" width="21.7" height="21.9" fill="#4285f4" fill-opacity="0.12"/><rect x="1420.2" y="534.6" width="21.7" height="21.9" fill="#4285f4" fill-opacity="0.10"/><rect x="1445.0" y="534.6" width="21.7" height="21.9" fill="#4285f4" fill-opacity="0.12"/><rect x="1469.8" y="534.6" width="21.7" height="21.9" fill="#4285f4" fill-opacity="0.25"/><rect x="1494.6" y="534.6" width="21.7" height="21.9" fill="#4285f4" fill-opacity="0.40"/><rect x="1519.4" y="534.6" width="21.7" height="21.9" fill="#4285f4" fill-opacity="0.60"/><rect x="1544.2" y="534.6" width="21.7" height="21.9" fill="#4285f4" fill-opacity="0.70"/><rect x="1569.0" y="534.6" width="21.7" height="21.9" fill="#4285f4" fill-opacity="0.62"/><rect x="1593.8" y="534.6" width="21.7" height="21.9" fill="#4285f4" fill-opacity="0.62"/><rect x="1618.6" y="534.6" width="21.7" height="21.9" fill="#4285f4" fill-opacity="0.70"/><rect x="1643.4" y="534.6" width="21.7" height="21.9" fill="#4285f4" fill-opacity="0.68"/><rect x="1668.2" y="534.6" width="21.7" height="21.9" fill="#4285f4" fill-opacity="0.65"/><rect x="1693.0" y="534.6" width="21.7" height="21.9" fill="#4285f4" fill-opacity="0.70"/><rect x="1717.8" y="534.6" width="21.7" height="21.9" fill="#4285f4" fill-opacity="0.70"/><rect x="1742.6" y="534.6" width="21.7" height="21.9" fill="#4285f4" fill-opacity="0.70"/><rect x="1767.4" y="534.6" width="21.7" height="21.9" fill="#4285f4" fill-opacity="0.80"/><rect x="1792.2" y="534.6" width="21.7" height="21.9" fill="#4285f4" fill-opacity="0.85"/><rect x="1817.0" y="534.6" width="21.7" height="21.9" fill="#4285f4" fill-opacity="0.95"/><rect x="1841.8" y="534.6" width="21.7" height="21.9" fill="#4285f4" fill-opacity="0.85"/><rect x="1866.6" y="534.6" width="21.7" height="21.9" fill="#4285f4" fill-opacity="0.70"/><rect x="1891.4" y="534.6" width="21.7" height="21.9" fill="#4285f4" fill-opacity="0.40"/><rect x="1321.0" y="559.4" width="21.7" height="21.9" fill="#4285f4" fill-opacity="0.25"/><rect x="1345.8" y="559.4" width="21.7" height="21.9" fill="#4285f4" fill-opacity="0.25"/><rect x="1370.6" y="559.4" width="21.7" height="21.9" fill="#4285f4" fill-opacity="0.20"/><rect x="1395.4" y="559.4" width="21.7" height="21.9" fill="#4285f4" fill-opacity="0.09"/><rect x="1420.2" y="559.4" width="21.7" height="21.9" fill="#4285f4" fill-opacity="0.08"/><rect x="1445.0" y="559.4" width="21.7" height="21.9" fill="#4285f4" fill-opacity="0.12"/><rect x="1469.8" y="559.4" width="21.7" height="21.9" fill="#4285f4" fill-opacity="0.22"/><rect x="1494.6" y="559.4" width="21.7" height="21.9" fill="#4285f4" fill-opacity="0.40"/><rect x="1519.4" y="559.4" width="21.7" height="21.9" fill="#4285f4" fill-opacity="0.45"/><rect x="1544.2" y="559.4" width="21.7" height="21.9" fill="#4285f4" fill-opacity="0.55"/><rect x="1569.0" y="559.4" width="21.7" height="21.9" fill="#4285f4" fill-opacity="0.55"/><rect x="1593.8" y="559.4" width="21.7" height="21.9" fill="#4285f4" fill-opacity="0.60"/><rect x="1618.6" y="559.4" width="21.7" height="21.9" fill="#4285f4" fill-opacity="0.60"/><rect x="1643.4" y="559.4" width="21.7" height="21.9" fill="#4285f4" fill-opacity="0.60"/><rect x="1668.2" y="559.4" width="21.7" height="21.9" fill="#4285f4" fill-opacity="0.62"/><rect x="1693.0" y="559.4" width="21.7" height="21.9" fill="#4285f4" fill-opacity="0.60"/><rect x="1717.8" y="559.4" width="21.7" height="21.9" fill="#4285f4" fill-opacity="0.45"/><rect x="1742.6" y="559.4" width="21.7" height="21.9" fill="#4285f4" fill-opacity="0.55"/><rect x="1767.4" y="559.4" width="21.7" height="21.9" fill="#4285f4" fill-opacity="0.65"/><rect x="1792.2" y="559.4" width="21.7" height="21.9" fill="#4285f4" fill-opacity="0.65"/><rect x="1817.0" y="559.4" width="21.7" height="21.9" fill="#4285f4" fill-opacity="0.80"/><rect x="1841.8" y="559.4" width="21.7" height="21.9" fill="#4285f4" fill-opacity="0.78"/><rect x="1866.6" y="559.4" width="21.7" height="21.9" fill="#4285f4" fill-opacity="0.62"/><rect x="1891.4" y="559.4" width="21.7" height="21.9" fill="#4285f4" fill-opacity="0.38"/><rect x="1321.0" y="584.2" width="21.7" height="21.9" fill="#4285f4" fill-opacity="0.30"/><rect x="1345.8" y="584.2" width="21.7" height="21.9" fill="#4285f4" fill-opacity="0.12"/><rect x="1370.6" y="584.2" width="21.7" height="21.9" fill="#4285f4" fill-opacity="0.09"/><rect x="1395.4" y="584.2" width="21.7" height="21.9" fill="#4285f4" fill-opacity="0.08"/><rect x="1420.2" y="584.2" width="21.7" height="21.9" fill="#4285f4" fill-opacity="0.08"/><rect x="1445.0" y="584.2" width="21.7" height="21.9" fill="#4285f4" fill-opacity="0.12"/><rect x="1469.8" y="584.2" width="21.7" height="21.9" fill="#4285f4" fill-opacity="0.25"/><rect x="1494.6" y="584.2" width="21.7" height="21.9" fill="#4285f4" fill-opacity="0.35"/><rect x="1519.4" y="584.2" width="21.7" height="21.9" fill="#4285f4" fill-opacity="0.50"/><rect x="1544.2" y="584.2" width="21.7" height="21.9" fill="#4285f4" fill-opacity="0.48"/><rect x="1569.0" y="584.2" width="21.7" height="21.9" fill="#4285f4" fill-opacity="0.52"/><rect x="1593.8" y="584.2" width="21.7" height="21.9" fill="#4285f4" fill-opacity="0.55"/><rect x="1618.6" y="584.2" width="21.7" height="21.9" fill="#4285f4" fill-opacity="0.55"/><rect x="1643.4" y="584.2" width="21.7" height="21.9" fill="#4285f4" fill-opacity="0.65"/><rect x="1668.2" y="584.2" width="21.7" height="21.9" fill="#4285f4" fill-opacity="0.62"/><rect x="1693.0" y="584.2" width="21.7" height="21.9" fill="#4285f4" fill-opacity="0.55"/><rect x="1717.8" y="584.2" width="21.7" height="21.9" fill="#4285f4" fill-opacity="0.60"/><rect x="1742.6" y="584.2" width="21.7" height="21.9" fill="#4285f4" fill-opacity="0.60"/><rect x="1767.4" y="584.2" width="21.7" height="21.9" fill="#4285f4" fill-opacity="0.62"/><rect x="1792.2" y="584.2" width="21.7" height="21.9" fill="#4285f4" fill-opacity="0.65"/><rect x="1817.0" y="584.2" width="21.7" height="21.9" fill="#4285f4" fill-opacity="0.80"/><rect x="1841.8" y="584.2" width="21.7" height="21.9" fill="#4285f4" fill-opacity="0.78"/><rect x="1866.6" y="584.2" width="21.7" height="21.9" fill="#4285f4" fill-opacity="0.68"/><rect x="1891.4" y="584.2" width="21.7" height="21.9" fill="#4285f4" fill-opacity="0.38"/><rect x="1321.0" y="608.9" width="21.7" height="21.9" fill="#4285f4" fill-opacity="0.45"/><rect x="1345.8" y="608.9" width="21.7" height="21.9" fill="#4285f4" fill-opacity="0.12"/><rect x="1370.6" y="608.9" width="21.7" height="21.9" fill="#4285f4" fill-opacity="0.10"/><rect x="1395.4" y="608.9" width="21.7" height="21.9" fill="#4285f4" fill-opacity="0.08"/><rect x="1420.2" y="608.9" width="21.7" height="21.9" fill="#4285f4" fill-opacity="0.06"/><rect x="1445.0" y="608.9" width="21.7" height="21.9" fill="#4285f4" fill-opacity="0.12"/><rect x="1469.8" y="608.9" width="21.7" height="21.9" fill="#4285f4" fill-opacity="0.25"/><rect x="1494.6" y="608.9" width="21.7" height="21.9" fill="#4285f4" fill-opacity="0.35"/><rect x="1519.4" y="608.9" width="21.7" height="21.9" fill="#4285f4" fill-opacity="0.55"/><rect x="1544.2" y="608.9" width="21.7" height="21.9" fill="#4285f4" fill-opacity="0.50"/><rect x="1569.0" y="608.9" width="21.7" height="21.9" fill="#4285f4" fill-opacity="0.65"/><rect x="1593.8" y="608.9" width="21.7" height="21.9" fill="#4285f4" fill-opacity="0.55"/><rect x="1618.6" y="608.9" width="21.7" height="21.9" fill="#4285f4" fill-opacity="0.55"/><rect x="1643.4" y="608.9" width="21.7" height="21.9" fill="#4285f4" fill-opacity="0.60"/><rect x="1668.2" y="608.9" width="21.7" height="21.9" fill="#4285f4" fill-opacity="0.62"/><rect x="1693.0" y="608.9" width="21.7" height="21.9" fill="#4285f4" fill-opacity="0.58"/><rect x="1717.8" y="608.9" width="21.7" height="21.9" fill="#4285f4" fill-opacity="0.60"/><rect x="1742.6" y="608.9" width="21.7" height="21.9" fill="#4285f4" fill-opacity="0.65"/><rect x="1767.4" y="608.9" width="21.7" height="21.9" fill="#4285f4" fill-opacity="0.80"/><rect x="1792.2" y="608.9" width="21.7" height="21.9" fill="#4285f4" fill-opacity="0.92"/><rect x="1817.0" y="608.9" width="21.7" height="21.9" fill="#4285f4" fill-opacity="0.92"/><rect x="1841.8" y="608.9" width="21.7" height="21.9" fill="#4285f4" fill-opacity="0.82"/><rect x="1866.6" y="608.9" width="21.7" height="21.9" fill="#4285f4" fill-opacity="0.70"/><rect x="1891.4" y="608.9" width="21.7" height="21.9" fill="#4285f4" fill-opacity="0.35"/><rect x="1321.0" y="633.7" width="21.7" height="21.9" fill="#4285f4" fill-opacity="0.38"/><rect x="1345.8" y="633.7" width="21.7" height="21.9" fill="#4285f4" fill-opacity="0.12"/><rect x="1370.6" y="633.7" width="21.7" height="21.9" fill="#4285f4" fill-opacity="0.12"/><rect x="1395.4" y="633.7" width="21.7" height="21.9" fill="#4285f4" fill-opacity="0.08"/><rect x="1420.2" y="633.7" width="21.7" height="21.9" fill="#4285f4" fill-opacity="0.06"/><rect x="1445.0" y="633.7" width="21.7" height="21.9" fill="#4285f4" fill-opacity="0.13"/><rect x="1469.8" y="633.7" width="21.7" height="21.9" fill="#4285f4" fill-opacity="0.35"/><rect x="1494.6" y="633.7" width="21.7" height="21.9" fill="#4285f4" fill-opacity="0.50"/><rect x="1519.4" y="633.7" width="21.7" height="21.9" fill="#4285f4" fill-opacity="0.55"/><rect x="1544.2" y="633.7" width="21.7" height="21.9" fill="#4285f4" fill-opacity="0.60"/><rect x="1569.0" y="633.7" width="21.7" height="21.9" fill="#4285f4" fill-opacity="0.58"/><rect x="1593.8" y="633.7" width="21.7" height="21.9" fill="#4285f4" fill-opacity="0.58"/><rect x="1618.6" y="633.7" width="21.7" height="21.9" fill="#4285f4" fill-opacity="0.60"/><rect x="1643.4" y="633.7" width="21.7" height="21.9" fill="#4285f4" fill-opacity="0.62"/><rect x="1668.2" y="633.7" width="21.7" height="21.9" fill="#4285f4" fill-opacity="0.65"/><rect x="1693.0" y="633.7" width="21.7" height="21.9" fill="#4285f4" fill-opacity="0.65"/><rect x="1717.8" y="633.7" width="21.7" height="21.9" fill="#4285f4" fill-opacity="0.60"/><rect x="1742.6" y="633.7" width="21.7" height="21.9" fill="#4285f4" fill-opacity="0.58"/><rect x="1767.4" y="633.7" width="21.7" height="21.9" fill="#4285f4" fill-opacity="0.65"/><rect x="1792.2" y="633.7" width="21.7" height="21.9" fill="#4285f4" fill-opacity="0.68"/><rect x="1817.0" y="633.7" width="21.7" height="21.9" fill="#4285f4" fill-opacity="0.68"/><rect x="1841.8" y="633.7" width="21.7" height="21.9" fill="#4285f4" fill-opacity="0.78"/><rect x="1866.6" y="633.7" width="21.7" height="21.9" fill="#4285f4" fill-opacity="0.68"/><rect x="1891.4" y="633.7" width="21.7" height="21.9" fill="#4285f4" fill-opacity="0.42"/><rect x="1321.0" y="658.5" width="21.7" height="21.9" fill="#4285f4" fill-opacity="0.45"/><rect x="1345.8" y="658.5" width="21.7" height="21.9" fill="#4285f4" fill-opacity="0.22"/><rect x="1370.6" y="658.5" width="21.7" height="21.9" fill="#4285f4" fill-opacity="0.12"/><rect x="1395.4" y="658.5" width="21.7" height="21.9" fill="#4285f4" fill-opacity="0.12"/><rect x="1420.2" y="658.5" width="21.7" height="21.9" fill="#4285f4" fill-opacity="0.12"/><rect x="1445.0" y="658.5" width="21.7" height="21.9" fill="#4285f4" fill-opacity="0.12"/><rect x="1469.8" y="658.5" width="21.7" height="21.9" fill="#4285f4" fill-opacity="0.35"/><rect x="1494.6" y="658.5" width="21.7" height="21.9" fill="#4285f4" fill-opacity="0.35"/><rect x="1519.4" y="658.5" width="21.7" height="21.9" fill="#4285f4" fill-opacity="0.55"/><rect x="1544.2" y="658.5" width="21.7" height="21.9" fill="#4285f4" fill-opacity="0.45"/><rect x="1569.0" y="658.5" width="21.7" height="21.9" fill="#4285f4" fill-opacity="0.33"/><rect x="1593.8" y="658.5" width="21.7" height="21.9" fill="#4285f4" fill-opacity="0.33"/><rect x="1618.6" y="658.5" width="21.7" height="21.9" fill="#4285f4" fill-opacity="0.30"/><rect x="1643.4" y="658.5" width="21.7" height="21.9" fill="#4285f4" fill-opacity="0.33"/><rect x="1668.2" y="658.5" width="21.7" height="21.9" fill="#4285f4" fill-opacity="0.42"/><rect x="1693.0" y="658.5" width="21.7" height="21.9" fill="#4285f4" fill-opacity="0.45"/><rect x="1717.8" y="658.5" width="21.7" height="21.9" fill="#4285f4" fill-opacity="0.52"/><rect x="1742.6" y="658.5" width="21.7" height="21.9" fill="#4285f4" fill-opacity="0.55"/><rect x="1767.4" y="658.5" width="21.7" height="21.9" fill="#4285f4" fill-opacity="0.60"/><rect x="1792.2" y="658.5" width="21.7" height="21.9" fill="#4285f4" fill-opacity="0.70"/><rect x="1817.0" y="658.5" width="21.7" height="21.9" fill="#4285f4" fill-opacity="0.85"/><rect x="1841.8" y="658.5" width="21.7" height="21.9" fill="#4285f4" fill-opacity="0.70"/><rect x="1866.6" y="658.5" width="21.7" height="21.9" fill="#4285f4" fill-opacity="0.58"/><rect x="1891.4" y="658.5" width="21.7" height="21.9" fill="#4285f4" fill-opacity="0.40"/><rect x="1321.0" y="683.3" width="21.7" height="21.9" fill="#4285f4" fill-opacity="0.42"/><rect x="1345.8" y="683.3" width="21.7" height="21.9" fill="#4285f4" fill-opacity="0.25"/><rect x="1370.6" y="683.3" width="21.7" height="21.9" fill="#4285f4" fill-opacity="0.12"/><rect x="1395.4" y="683.3" width="21.7" height="21.9" fill="#4285f4" fill-opacity="0.12"/><rect x="1420.2" y="683.3" width="21.7" height="21.9" fill="#4285f4" fill-opacity="0.12"/><rect x="1445.0" y="683.3" width="21.7" height="21.9" fill="#4285f4" fill-opacity="0.13"/><rect x="1469.8" y="683.3" width="21.7" height="21.9" fill="#4285f4" fill-opacity="0.30"/><rect x="1494.6" y="683.3" width="21.7" height="21.9" fill="#4285f4" fill-opacity="0.55"/><rect x="1519.4" y="683.3" width="21.7" height="21.9" fill="#4285f4" fill-opacity="0.65"/><rect x="1544.2" y="683.3" width="21.7" height="21.9" fill="#4285f4" fill-opacity="0.65"/><rect x="1569.0" y="683.3" width="21.7" height="21.9" fill="#4285f4" fill-opacity="0.70"/><rect x="1593.8" y="683.3" width="21.7" height="21.9" fill="#4285f4" fill-opacity="0.68"/><rect x="1618.6" y="683.3" width="21.7" height="21.9" fill="#4285f4" fill-opacity="0.62"/><rect x="1643.4" y="683.3" width="21.7" height="21.9" fill="#4285f4" fill-opacity="0.65"/><rect x="1668.2" y="683.3" width="21.7" height="21.9" fill="#4285f4" fill-opacity="0.68"/><rect x="1693.0" y="683.3" width="21.7" height="21.9" fill="#4285f4" fill-opacity="0.65"/><rect x="1717.8" y="683.3" width="21.7" height="21.9" fill="#4285f4" fill-opacity="0.70"/><rect x="1742.6" y="683.3" width="21.7" height="21.9" fill="#4285f4" fill-opacity="0.78"/><rect x="1767.4" y="683.3" width="21.7" height="21.9" fill="#4285f4" fill-opacity="0.88"/><rect x="1792.2" y="683.3" width="21.7" height="21.9" fill="#4285f4" fill-opacity="0.85"/><rect x="1817.0" y="683.3" width="21.7" height="21.9" fill="#4285f4" fill-opacity="1.00"/><rect x="1841.8" y="683.3" width="21.7" height="21.9" fill="#4285f4" fill-opacity="0.97"/><rect x="1866.6" y="683.3" width="21.7" height="21.9" fill="#4285f4" fill-opacity="0.88"/><rect x="1891.4" y="683.3" width="21.7" height="21.9" fill="#4285f4" fill-opacity="0.58"/><path d="M1318.7 533 V707.3 H1913.6 M1320 707 v4.5 M1468.5 707 v4.5 M1616.7 707 v4.5 M1765.2 707 v4.5 M1913.3 707 v4.5" fill="none" stroke="#9aa0a6" stroke-width="1.2"/></svg>
<span class="t" style="left:1320.3px;top:711.00px;font-size:17.7px;line-height:24px;font-weight:normal;color:#5f6368;transform:scaleX(0.9570);transform-origin:0 0;">12 AM</span>
<span class="t" style="left:1460.7px;top:711.00px;font-size:17.7px;line-height:24px;font-weight:normal;color:#5f6368;transform:scaleX(0.9650);transform-origin:0 0;">6 AM</span>
<span class="t" style="left:1593.8px;top:711.00px;font-size:17.7px;line-height:24px;font-weight:normal;color:#5f6368;transform:scaleX(0.9193);transform-origin:0 0;">12 PM</span>
<span class="t" style="left:1734.3px;top:711.00px;font-size:17.7px;line-height:24px;font-weight:normal;color:#5f6368;transform:scaleX(0.9129);transform-origin:0 0;">6 PM</span>
<span class="t" style="left:1865.5px;top:711.00px;font-size:17.7px;line-height:24px;font-weight:normal;color:#5f6368;transform:scaleX(0.9590);transform-origin:0 0;">12 AM</span>
<span class="t" style="left:1300.5px;top:778.00px;font-size:18.2px;line-height:24px;font-weight:normal;color:#1a73e8;transform:scaleX(1.0359);transform-origin:0 0;-webkit-text-stroke:0.4px #1a73e8;">Ad schedule</span>
<div class="abs" style="left:1277.7px;top:848.8px;width:672.5px;height:300.0px;background:#fff;border-radius:9.5px;box-shadow:0 1px 2px rgba(60,64,67,.24),0 1px 4px 1px rgba(60,64,67,.13);overflow:hidden"><div style="height:65.5px;background:#f5f9fb"></div></div>
<div class="abs" style="left:1304.2px;top:878.5px;width:4.7px;height:12.2px;background:#3c4043;"></div><div class="abs" style="left:1311.4px;top:872.5px;width:4.7px;height:18.2px;background:#3c4043;"></div><div class="abs" style="left:1318.3px;top:883.0px;width:4.7px;height:7.8px;background:#3c4043;"></div>
<span class="t" style="left:1338.7px;top:870.00px;font-size:16.5px;line-height:22px;font-weight:normal;color:#3c4043;transform:scaleX(1.0556);transform-origin:0 0;">Search auction insights</span>
<svg class="abs" style="left:1721.3px;top:866.6px" width="27.4" height="27.4" viewBox="0 0 24 24"><path fill="#5f6368" d="M11 18h2v-2h-2v2zm1-16C6.48 2 2 6.48 2 12s4.48 10 10 10 10-4.48 10-10S17.52 2 12 2zm0 18c-4.41 0-8-3.59-8-8s3.59-8 8-8 8 3.59 8 8-3.59 8-8 8zm0-14c-2.21 0-4 1.79-4 4h2c0-1.1.9-2 2-2s2 .9 2 2c0 2-3 1.75-3 5h2c0-2.25 3-2.5 3-5 0-2.21-1.79-4-4-4z"/></svg>
<svg class="abs" style="left:1762px;top:864px" width="38" height="34" viewBox="1762 864 38 34"><circle cx="1787.5" cy="875.5" r="8" fill="#5f6368"/><circle cx="1772" cy="886.5" r="5.8" fill="#5f6368"/><circle cx="1785.7" cy="892.8" r="3.5" fill="#5f6368"/></svg>
<svg class="abs" style="left:1818px;top:866px" width="44" height="32" viewBox="1818 866 44 32"><path d="M1823 892 L1836 881 L1843.5 887 L1857 872" fill="none" stroke="#80868b" stroke-width="3"/></svg>
<svg class="abs" style="left:1889.3px;top:865.0px" width="33.0" height="33.0" viewBox="0 0 24 24"><path fill="#5f6368" d="M12 8c1.1 0 2-.9 2-2s-.9-2-2-2-2 .9-2 2 .9 2 2 2zm0 2c-1.1 0-2 .9-2 2s.9 2 2 2 2-.9 2-2-.9-2-2-2zm0 6c-1.1 0-2 .9-2 2s.9 2 2 2 2-.9 2-2-.9-2-2-2z"/></svg>
<span class="t" style="left:1300.0px;top:937.00px;font-size:19px;line-height:25px;font-weight:normal;color:#202124;transform:scaleX(1.1146);transform-origin:0 0;-webkit-text-stroke:0.30px #202124;">Other advertisers who are participating in the same ad auctions</span>
<span class="t" style="left:1305.0px;top:986.00px;font-size:16.5px;line-height:22px;font-weight:normal;color:#3c4043;transform:scaleX(1.0556);transform-origin:0 0;">Impression share</span><svg class="abs" style="left:1445.1px;top:993.8px" width="14" height="8" viewBox="0 0 14 8"><path d="M0.5 0.5 H13.5 L7 7.5Z" fill="#5f6368"/></svg><div class="abs" style="left:1305.0px;top:1008.2px;width:159.0px;height:1.0px;background:#dadce0;"></div>
<span class="t" style="left:1301.4px;top:1022.00px;font-size:17.7px;line-height:24px;font-weight:normal;color:#5f6368;transform:scaleX(0.9581);transform-origin:0 0;">100.00%</span>
<div class="abs" style="left:1375.7px;top:1023.3px;width:366.7px;height:1.0px;background:#dadce0;"></div>
<div class="abs" style="left:1759.4px;top:1053.9px;width:16.4px;height:16.4px;border-radius:50%;background:#8ab4f8"></div>
<span class="t" style="left:1782.0px;top:1052.00px;font-size:18px;line-height:24px;font-weight:normal;color:#5f6368;transform:scaleX(0.9679);transform-origin:0 0;">You</span>
<div class="abs" style="left:1759.4px;top:1084.4px;width:16.4px;height:16.4px;border-radius:50%;background:#e8837a"></div>
<span class="t" style="left:1782.0px;top:1083.00px;font-size:18px;line-height:24px;font-weight:normal;color:#5f6368;transform:scaleX(0.9587);transform-origin:0 0;">wowoutwest</span>
<div class="abs" style="left:237.0px;top:151.5px;width:1762.0px;height:69.0px;background:#fff;box-shadow:0 2px 3px rgba(60,64,67,.35)"></div>
<span class="t" style="left:270.6px;top:166.00px;font-size:28.5px;line-height:38px;font-weight:normal;color:#202124;transform:scaleX(1.0978);transform-origin:0 0;">Overview</span>
<span class="t" style="left:1525.5px;top:176.00px;font-size:17.5px;line-height:23px;font-weight:normal;color:#5f6368;transform:scaleX(1.1186);transform-origin:0 0;">Last 30 days</span>
<div class="abs" style="left:1648.5px;top:164.5px;width:319.5px;height:43px;border:1px solid #80868b;border-radius:5px"></div>
<span class="t" style="left:1672.0px;top:176.00px;font-size:17.5px;line-height:23px;font-weight:normal;color:#3c4043;transform:scaleX(1.1106);transform-origin:0 0;">Dec 9, 2023 – Jan 7, 2024</span>
<svg class="abs" style="left:1932.5px;top:183px" width="14" height="8" viewBox="0 0 14 8"><path d="M0.5 0.5 H13.5 L7 7.5Z" fill="#5f6368"/></svg>
<svg class="abs" style="left:1986px;top:174px" width="14" height="24" viewBox="0 0 14 24"><path d="M12.5 2.5 L3.5 11.7 L12.5 21" fill="none" stroke="#5f6368" stroke-width="2.2"/></svg>
<div class="abs" style="left:0.0px;top:72.5px;width:1999.0px;height:79.5px;background:#fff;border-bottom:1px solid #dfe3e6"></div>
<span class="t" style="left:32.0px;top:94.00px;font-size:17.7px;line-height:24px;font-weight:normal;color:#5f6368;transform:scaleX(0.9968);transform-origin:0 0;">Filters</span>
<div class="abs" style="left:113.7px;top:90.3px;width:202px;height:42.7px;border:1px solid #dadce0;border-radius:22px"></div>
<div class="abs" style="left:327.2px;top:90.3px;width:192.5px;height:42.7px;border:1px solid #dadce0;border-radius:22px"></div>
<span class="t" style="left:132.2px;top:100.00px;font-size:17.7px;line-height:24px;font-weight:normal;color:#5f6368;transform:scaleX(1.0271);transform-origin:0 0;-webkit-text-stroke:0.55px #5f6368;">Campaign status: All</span>
<span class="t" style="left:345.2px;top:100.00px;font-size:17.7px;line-height:24px;font-weight:normal;color:#5f6368;transform:scaleX(1.0288);transform-origin:0 0;-webkit-text-stroke:0.55px #5f6368;">Ad group status: All</span>
<span class="t" style="left:537.3px;top:100.00px;font-size:17.7px;line-height:24px;font-weight:normal;color:#80868b;transform:scaleX(1.0184);transform-origin:0 0;">Add filter</span>
<div class="abs" style="left:0.0px;top:0.0px;width:1999.0px;height:72.5px;background:#5f636b;"></div>
<div class="abs" style="left:30.0px;top:20.6px;width:25.5px;height:3.0px;background:#fff;"></div>
<div class="abs" style="left:30.0px;top:27.1px;width:25.5px;height:3.0px;background:#fff;"></div>
<div class="abs" style="left:30.0px;top:34.0px;width:25.5px;height:3.0px;background:#fff;"></div>
<svg class="abs" style="left:78px;top:5px" width="50" height="46" viewBox="78 5 50 46"><path d="M84.2 35.5 L96.6 14.2 L107.8 20.7 L95.4 42 Z" fill="#fbbc04"/><line x1="103.1" y1="16.1" x2="116.9" y2="39.5" stroke="#4285f4" stroke-width="12.8" stroke-linecap="round"/><circle cx="89.5" cy="39.4" r="6.5" fill="#34a853"/></svg>
<span class="t" style="left:142.3px;top:7.00px;font-size:32px;line-height:42px;font-weight:normal;color:#fff;transform:scaleX(0.9662);transform-origin:0 0;-webkit-text-stroke:0.51px #fff;">Google</span>
<span class="t" style="left:254.0px;top:7.00px;font-size:32px;line-height:42px;font-weight:normal;color:#fff;transform:scaleX(0.9068);transform-origin:0 0;-webkit-text-stroke:0.51px #fff;">Ads</span>
<div class="abs" style="left:329.3px;top:7.0px;width:2.0px;height:44.0px;background:#c8cccd;"></div>
<span class="t" style="left:354.0px;top:5.00px;font-size:16.2px;line-height:22px;font-weight:normal;color:#fff;transform:scaleX(1.0220);transform-origin:0 0;-webkit-text-stroke:0.26px #fff;">Marketing Link LLC. CEO: Mykola Luk…</span>
<svg class="abs" style="left:663px;top:8px" width="14" height="16" viewBox="0 0 14 16"><path d="M3 2 L10.5 8 L3 14" fill="none" stroke="#fff" stroke-width="1.8"/></svg>
<div class="abs" style="left:347.0px;top:30.5px;width:16.9px;height:20.0px;background:#868a8d;"></div><div class="abs" style="left:363.4px;top:30.5px;width:16.9px;height:20.0px;background:#7d8185;"></div><div class="abs" style="left:379.9px;top:30.5px;width:16.9px;height:20.0px;background:#84888b;"></div><div class="abs" style="left:396.3px;top:30.5px;width:16.9px;height:20.0px;background:#777b80;"></div><div class="abs" style="left:412.8px;top:30.5px;width:16.9px;height:20.0px;background:#777b80;"></div><div class="abs" style="left:429.2px;top:30.5px;width:16.9px;height:20.0px;background:#797d81;"></div><div class="abs" style="left:445.7px;top:30.5px;width:16.9px;height:20.0px;background:#777b80;"></div><div class="abs" style="left:462.1px;top:30.5px;width:16.9px;height:20.0px;background:#868a8d;"></div><div class="abs" style="left:478.6px;top:30.5px;width:16.9px;height:20.0px;background:#797d81;"></div>
<span class="t" style="left:497.0px;top:27.00px;font-size:20.5px;line-height:27px;font-weight:normal;color:#fff;transform:scaleX(1.0877);transform-origin:0 0;-webkit-text-stroke:0.55px #fff;">.de</span>
<div class="abs" style="left:540.0px;top:34.5px;width:16.6px;height:18.0px;background:#777b80;"></div><div class="abs" style="left:556.1px;top:34.5px;width:16.6px;height:18.0px;background:#797d81;"></div><div class="abs" style="left:572.3px;top:34.5px;width:16.6px;height:18.0px;background:#7d8185;"></div><div class="abs" style="left:588.4px;top:34.5px;width:16.6px;height:18.0px;background:#777b80;"></div><div class="abs" style="left:604.6px;top:34.5px;width:16.6px;height:18.0px;background:#777b80;"></div><div class="abs" style="left:620.7px;top:34.5px;width:16.6px;height:18.0px;background:#84888b;"></div><div class="abs" style="left:636.9px;top:34.5px;width:16.6px;height:18.0px;background:#84888b;"></div>
<svg class="abs" style="left:696px;top:37.5px" width="14" height="8" viewBox="0 0 14 8"><path d="M0.5 0.5 H13.5 L7 7.5Z" fill="#fff"/></svg>
<div class="abs" style="left:741.3px;top:7.0px;width:2.0px;height:44.0px;background:#c8cccd;"></div>
<span class="t" style="left:767.0px;top:10.00px;font-size:29.5px;line-height:39px;font-weight:normal;color:#fff;transform:scaleX(1.0237);transform-origin:0 0;">All campaigns</span>
<svg class="abs" style="left:1390.8px;top:-6.8px" width="33.5" height="33.5" viewBox="0 0 24 24"><path fill="#fff" d="M15.5 14h-.79l-.28-.27C15.41 12.59 16 11.11 16 9.5 16 5.91 13.09 3 9.5 3S3 5.91 3 9.5 5.91 16 9.5 16c1.61 0 3.09-.59 4.23-1.57l.27.28v.79l5 4.99L20.49 19l-4.99-5zm-6 0C7.01 14 5 11.99 5 9.5S7.01 5 9.5 5 14 7.01 14 9.5 11.99 14 9.5 14z"/></svg>
<svg class="abs" style="left:1480.8px;top:-6.8px" width="33.5" height="33.5" viewBox="0 0 24 24"><path fill="#fff" d="M19 3H5c-1.1 0-2 .9-2 2v14c0 1.1.9 2 2 2h14c1.1 0 2-.9 2-2V5c0-1.1-.9-2-2-2zm0 16H5V5h14v14zM7 10h2v7H7zm4-3h2v10h-2zm4 6h2v4h-2z"/></svg>
<svg class="abs" style="left:1582.8px;top:-6.8px" width="33.5" height="33.5" viewBox="0 0 24 24"><path fill="#fff" d="M22.7 19l-9.1-9.1c.9-2.3.4-5-1.5-6.9-2-2-5-2.4-7.4-1.3L9 6 6 9 1.6 4.7C.4 7.1.9 10.1 2.9 12.1c1.9 1.9 4.6 2.4 6.9 1.5l9.1 9.1c.4.4 1 .4 1.4 0l2.3-2.3c.5-.4.5-1.1.1-1.4z"/></svg>
<svg class="abs" style="left:1684.8px;top:-6.8px" width="33.5" height="33.5" viewBox="0 0 24 24"><path fill="#fff" d="M17.65 6.35C16.2 4.9 14.21 4 12 4c-4.42 0-7.99 3.58-7.99 8s3.57 8 7.99 8c3.73 0 6.84-2.55 7.73-6h-2.08c-.82 2.33-3.04 4-5.65 4-3.31 0-6-2.69-6-6s2.69-6 6-6c1.66 0 3.14.69 4.22 1.78L13 11h7V4l-2.35 2.35z"/></svg>
<svg class="abs" style="left:1770.2px;top:-6.8px" width="33.5" height="33.5" viewBox="0 0 24 24"><path fill="#fff" d="M11 18h2v-2h-2v2zm1-16C6.48 2 2 6.48 2 12s4.48 10 10 10 10-4.48 10-10S17.52 2 12 2zm0 18c-4.41 0-8-3.59-8-8s3.59-8 8-8 8 3.59 8 8-3.59 8-8 8zm0-14c-2.21 0-4 1.79-4 4h2c0-1.1.9-2 2-2s2 .9 2 2c0 2-3 1.75-3 5h2c0-2.25 3-2.5 3-5 0-2.21-1.79-4-4-4z"/></svg>
<svg class="abs" style="left:1866.2px;top:-6.8px" width="33.5" height="33.5" viewBox="0 0 24 24"><path fill="#fff" d="M12 22c1.1 0 2-.9 2-2h-4c0 1.1.9 2 2 2zm6-6v-5c0-3.07-1.63-5.64-4.5-6.32V4c0-.83-.67-1.5-1.5-1.5s-1.5.67-1.5 1.5v.68C7.64 5.36 6 7.92 6 11v5l-2 2v1h16v-1l-2-2zm-2 1H8v-6c0-2.48 1.51-4.5 4-4.5s4 2.02 4 4.5v6z"/></svg>
<div class="abs" style="left:1885.5px;top:-13.5px;width:26px;height:26px;border-radius:50%;background:#d03027"></div>
<div class="abs" style="left:1897.3px;top:3.3px;width:2.6px;height:2.6px;background:#fff;"></div>
<span class="t" style="left:1380.8px;top:30.00px;font-size:16.5px;line-height:22px;font-weight:normal;color:#fff;transform:scaleX(1.0080);transform-origin:0 0;-webkit-text-stroke:0.35px #fff;">Search</span>
<span class="t" style="left:1467.7px;top:30.00px;font-size:16.5px;line-height:22px;font-weight:normal;color:#fff;transform:scaleX(1.0401);transform-origin:0 0;-webkit-text-stroke:0.35px #fff;">Reports</span>
<span class="t" style="left:1563.0px;top:30.00px;font-size:16.5px;line-height:22px;font-weight:normal;color:#fff;transform:scaleX(1.0405);transform-origin:0 0;-webkit-text-stroke:0.35px #fff;">Tools and</span>
<span class="t" style="left:1568.4px;top:49.00px;font-size:16.5px;line-height:22px;font-weight:normal;color:#fff;transform:scaleX(1.0971);transform-origin:0 0;-webkit-text-stroke:0.35px #fff;">settings</span>
<span class="t" style="left:1672.0px;top:30.00px;font-size:16.5px;line-height:22px;font-weight:normal;color:#fff;transform:scaleX(1.0176);transform-origin:0 0;-webkit-text-stroke:0.35px #fff;">Refresh</span>
<span class="t" style="left:1769.8px;top:30.00px;font-size:16.5px;line-height:22px;font-weight:normal;color:#fff;transform:scaleX(0.9989);transform-origin:0 0;-webkit-text-stroke:0.35px #fff;">Help</span>
<span class="t" style="left:1833.0px;top:30.00px;font-size:16.5px;line-height:22px;font-weight:normal;color:#fff;transform:scaleX(1.1127);transform-origin:0 0;-webkit-text-stroke:0.35px #fff;">Notifications</span>
<div class="abs" style="left:1952.0px;top:7.0px;width:2.0px;height:44.0px;background:#c8cccd;"></div>
<div class="abs" style="left:1964.0px;top:10.0px;width:9.5px;height:11.0px;background:#6a6e73;"></div><div class="abs" style="left:1973.0px;top:10.0px;width:9.5px;height:11.0px;background:#6a6e73;"></div><div class="abs" style="left:1982.0px;top:10.0px;width:9.5px;height:11.0px;background:#6a6e73;"></div><div class="abs" style="left:1991.0px;top:10.0px;width:9.5px;height:11.0px;background:#686c71;"></div><div class="abs" style="left:1964.0px;top:20.5px;width:9.5px;height:11.0px;background:#6e7277;"></div><div class="abs" style="left:1973.0px;top:20.5px;width:9.5px;height:11.0px;background:#6a6e73;"></div><div class="abs" style="left:1982.0px;top:20.5px;width:9.5px;height:11.0px;background:#686c71;"></div><div class="abs" style="left:1991.0px;top:20.5px;width:9.5px;height:11.0px;background:#6a6e73;"></div>
<div class="abs" style="left:0.0px;top:1074.0px;width:1999.0px;height:18.0px;background:linear-gradient(rgba(60,64,67,0),rgba(60,64,67,.06));"></div>
<div class="abs" style="left:0.0px;top:1091.6px;width:1999.0px;height:2.0px;background:#fff;"></div>
</div>
</body></html>
